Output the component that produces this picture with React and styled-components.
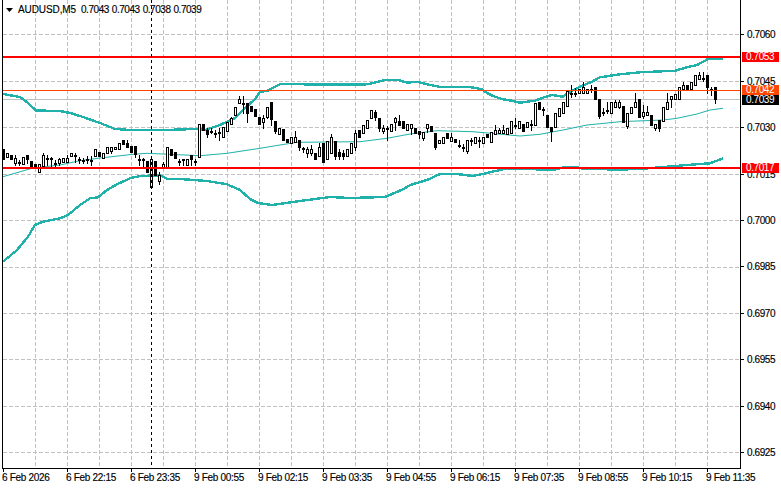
import React from "react";
import styled, { createGlobalStyle } from "styled-components";

const Global = createGlobalStyle`
  html, body { margin: 0; padding: 0; background: #fff; }
  body { font-family: "Liberation Sans", Arial, sans-serif; }
`;

const Terminal = styled.div`
  display: grid;
  grid-template-columns: 741px 40px;
  grid-template-rows: 469px 20px;
  width: 781px;
  height: 489px;
  overflow: hidden;
  background: #fff;
  color: #000;
  font-size: 10px;
  letter-spacing: -0.3px;
  -webkit-text-stroke: 0.15px currentColor;
`;
const Plot = styled.div`
  position: relative;
  width: 741px;
  height: 469px;
`;
const ChartSvg = styled.svg`
  display: block;
`;
const Legend = styled.div`
  position: absolute;
  top: 4px;
  left: 6px;
  display: flex;
  align-items: center;
  gap: 5px;
  line-height: 12px;
  white-space: pre;
`;
const LegendName = styled.span`
  letter-spacing: -0.1px;
`;
const LegendValues = styled.span`
  letter-spacing: -0.45px;
  word-spacing: 0.6px;
`;
const PriceAxis = styled.div`
  position: relative;
  display: flex;
  flex-direction: column;
  padding-top: 11.5px;
  letter-spacing: -0.4px;
`;
const PriceTick = styled.div`
  flex: 0 0 46.44px;
  display: flex;
  align-items: center;
  gap: 3px;
  line-height: 9px;
  &::before {
    content: "";
    width: 3px;
    height: 1px;
    background: #000;
  }
`;
const Tag = styled.div`
  position: absolute;
  left: 1px;
  top: ${(p) => p.$top}px;
  width: 37px;
  height: 10px;
  line-height: 10px;
  padding-left: 4px;
  box-sizing: border-box;
  color: #fff;
  -webkit-text-stroke: 0;
  background: ${(p) => p.$bg};
`;
const TimeAxis = styled.div`
  grid-column: 1 / -1;
  display: flex;
  padding-left: 2px;
`;
const TimeTick = styled.div`
  flex: 0 0 64px;
  height: 20px;
  position: relative;
  line-height: 12px;
  padding-top: 3px;
  box-sizing: border-box;
  white-space: nowrap;
  &::before {
    content: "";
    position: absolute;
    left: 1px;
    top: 0;
    width: 1px;
    height: 3px;
    background: #000;
  }
`;

const prices = ["0.7060","0.7045","0.7030","0.7015","0.7000","0.6985","0.6970","0.6955","0.6940","0.6925"];
const times = ["6 Feb 2026","6 Feb 22:15","6 Feb 23:35","9 Feb 00:55","9 Feb 02:15","9 Feb 03:35","9 Feb 04:55","9 Feb 06:15","9 Feb 07:35","9 Feb 08:55","9 Feb 10:15","9 Feb 11:35"];

const upper = "3,94 20,97 28,103 36,110.5 60,111 70,113 80,116 100,123 115,129 130,130 165,130 195,129 205,130 220,125 235,118 245,108 255,99 260,92 268,90.5 275,86.7 280,84.3 292,83.7 300,84 310,84.7 368,84.3 378,81.7 385,80 398,80 407,82.7 417,81.7 427,84.3 440,87 470,87 482,89.3 487,93 493,96 503,99.3 512,100.7 520,102.7 535,100.7 543,97.7 552,95 563,96.7 570,91.7 580,86.7 592,81.7 600,77.3 620,74.3 640,72.3 675,70.7 687,67.3 697,65 708,59 715,58.3 723,58.3";
const middle = "3,176.7 33,168 60,165 80,160.7 100,158 133,154.3 147,153.3 200,155.7 227,153.3 260,148.3 280,145 297,142.3 360,141.7 387,138.3 410,134 437,130.7 473,131.7 520,136 540,134.3 563,130 587,125 620,121.7 663,120 677,118.3 697,114 710,110 723,108.3";
const lower = "3,261.7 17,250 28,236.7 35,225 43,221.7 60,218.3 68,215 80,205 90,198.3 98,197.3 107,190 117,184.3 130,178.3 140,176 160,175.3 167,178.7 180,179 207,181 227,184.3 240,190 250,199 258,203 272,205 300,201 330,197 350,198 385,197 403,189.3 410,185 427,180 440,174 457,174 473,176 487,173 503,169.3 517,168.3 540,169.5 555,169.5 565,167 575,167 585,169 620,169.5 640,169 667,166.7 687,165 710,163.3 723,158.3";

// Candles: body top, body bottom, wick top, wick bottom, filled. Values are 3x crop rows.
const seg1 = [[448,478,448,478,1],[458,472,458,472,0],[464,476,464,476,1],[475,488,465,495,0],[487,488,480,495,0],[470,492,470,492,0],[465,478,465,490,1],[482,500,482,500,1],[492,505,492,505,1],[493,515,493,515,0],[465,497,458,497,0],[473,474,465,495,0],[473,474,470,497,0],[490,491,480,498,0],[476,488,475,495,0],[473,485,473,485,0],[473,485,465,485,0],[458,467,458,467,0],[465,466,458,485,0],[478,479,470,488,0],[480,481,475,490,0],[478,479,468,490,0],[480,481,468,495,0],[448,468,448,468,0],[456,468,456,468,1],[458,475,458,475,0],[440,460,440,460,0],[440,452,440,460,0],[440,448,440,448,0],[430,448,430,448,0],[421,432,421,432,1],[430,440,420,440,1],[438,455,438,455,1],[438,462,438,470,1],[476,477,465,495,0],[478,479,475,500,0],[484,515,484,515,1],[476,560,476,560,0],[484,525,484,525,1],[525,543,515,552,0],[492,500,485,500,0],[440,500,440,500,0],[448,466,448,466,1],[455,475,455,475,1],[484,485,476,495,0],[478,479,476,495,0],[476,495,476,495,0],[466,478,466,495,1],[484,485,476,495,0],[372,470,372,470,0],[372,390,372,390,1],[390,402,385,412,1],[392,393,385,400,0],[400,401,390,410,0],[395,396,385,420,0],[380,412,380,412,0],[365,392,365,392,0],[355,372,350,372,0],[320,345,320,345,0],[297,308,288,308,0],[310,311,288,340,0],[310,340,310,365,1],[318,332,318,332,1],[328,348,328,348,1],[350,372,350,372,1]];
const seg2 = [[175,185,165,203,0],[140,170,140,175,0],[127,178,127,195,1],[183,212,183,220,1],[203,222,203,222,0],[207,240,207,240,1],[238,245,238,245,1],[232,248,232,248,0],[232,245,212,245,0],[240,262,240,270,1],[265,266,260,277,0],[268,278,260,290,0],[268,278,255,285,0],[278,297,278,297,1],[260,287,250,287,0],[248,305,248,305,1],[242,297,242,297,0],[232,280,222,280,0],[242,288,242,298,1],[275,288,268,298,1],[278,288,270,298,1],[268,287,268,287,0],[250,278,250,278,0],[220,260,210,270,0],[210,232,210,232,1],[195,220,195,220,0],[180,205,180,205,0],[150,175,150,175,0],[157,170,150,180,1],[175,203,175,212,1],[203,213,195,220,0],[205,206,198,240,0],[192,212,192,212,0],[175,187,170,210,0],[183,195,165,195,1],[183,203,183,203,1],[193,210,193,210,0],[193,205,193,222,0],[203,220,203,220,1],[212,222,212,235,1],[215,233,215,240,0],[193,205,193,215,0],[197,212,197,212,1],[218,260,218,268,1],[240,250,240,250,0],[232,250,232,250,0],[220,235,220,235,1],[232,242,220,242,0],[237,245,237,245,1],[255,256,240,260,0],[262,263,252,272,0],[240,272,240,278,0],[240,241,235,255,0],[232,250,232,250,0],[240,241,232,260,0],[232,250,232,250,0],[222,232,222,232,1],[215,245,215,245,0],[210,222,195,222,0],[210,220,205,220,0],[210,220,195,220,0],[205,222,205,222,0],[183,220,183,220,0],[195,196,175,205,0],[183,205,183,205,0]];
const seg3 = [[282,302,282,302,1],[275,292,275,292,0],[283,284,270,300,0],[220,285,220,285,0],[215,238,215,238,1],[238,239,230,255,0],[255,290,255,290,1],[292,303,292,332,1],[248,292,248,292,0],[235,257,235,257,0],[217,248,217,248,0],[182,228,182,228,0],[190,191,165,200,0],[190,191,175,198,0],[177,190,177,190,0],[170,190,155,190,0],[177,190,177,190,0],[178,179,165,185,0],[172,208,172,208,1],[208,258,208,265,1],[245,246,235,255,0],[240,241,215,250,0],[217,248,217,248,0],[217,230,210,230,0],[217,230,210,235,0],[228,275,228,275,1],[250,288,250,293,0],[230,250,230,250,0],[215,230,190,230,0],[208,260,208,260,1],[247,258,225,265,0],[247,255,228,255,0],[255,285,255,285,1],[283,293,283,300,0],[270,295,270,302,1],[230,272,230,272,0],[215,238,190,238,0],[198,207,198,230,0],[193,207,193,208,0],[172,207,172,207,0],[165,178,155,178,0],[165,177,165,180,1],[155,177,155,177,0],[135,165,135,165,0],[135,146,127,146,0],[143,144,127,152,0],[135,170,135,190,1],[178,179,172,195,0],[172,208,172,218,1]];

const row = (v, base) => Math.round(base + v / 3);
const candles = [
  ...seg1.map((c) => c.map((v, k) => (k < 4 ? row(v, 0) : v))),
  ...seg2.map((c) => c.map((v, k) => (k < 4 ? row(v, 60) : v))),
  ...seg3.map((c) => c.map((v, k) => (k < 4 ? row(v, 30) : v))),
];

const vGrid = Array.from({ length: 22 }, (_, i) => 35.5 + 32 * i);
const hGrid = prices.map((_, i) => Math.round(34.3 + 46.44 * i) + 0.5);

function Chart() {
  return (
    <ChartSvg width="741" height="469" viewBox="0 0 741 469">
      <g stroke="#c0c0c0" strokeWidth="1" strokeDasharray="4 2" shapeRendering="crispEdges">
        {vGrid.map((x) => <line key={x} x1={x} y1="0" x2={x} y2="468" />)}
        {hGrid.map((y) => <line key={y} x1="3" y1={y} x2="740" y2={y} />)}
      </g>
      <line x1="3" y1="99.5" x2="740" y2="99.5" stroke="#c0c0c0" shapeRendering="crispEdges" />
      <polyline points={middle} fill="none" stroke="#20b2aa" strokeWidth="1" />
      <polyline points={upper} fill="none" stroke="#20b2aa" strokeWidth="2.4" shapeRendering="crispEdges" />
      <polyline points={lower} fill="none" stroke="#20b2aa" strokeWidth="2.4" shapeRendering="crispEdges" />
      <g shapeRendering="crispEdges">
        {candles.map(([t, b, wt, wb, f], i) => {
          const x = 3 + 4 * i;
          return (
            <g key={i}>
              <line x1={x + 0.5} y1={wt} x2={x + 0.5} y2={wb + 1} stroke="#000" />
              <rect x={x - 0.5} y={t + 0.5} width="2" height={Math.max(b - t, 1) - 0.5} fill={f ? "#000" : "#fff"} stroke="#000" />
            </g>
          );
        })}
      </g>
      <g shapeRendering="crispEdges">
        <line x1="3" y1="90.5" x2="740" y2="90.5" stroke="#ff4500" />
        <line x1="3" y1="57" x2="740" y2="57" stroke="#ff0000" strokeWidth="2" />
        <line x1="3" y1="168" x2="740" y2="168" stroke="#ff0000" strokeWidth="2" />
        <line x1="151.5" y1="0" x2="151.5" y2="468" stroke="#000" strokeDasharray="3 3" />
        <line x1="2.5" y1="0" x2="2.5" y2="469" stroke="#000" />
        <line x1="2" y1="468.5" x2="741" y2="468.5" stroke="#000" />
        <line x1="740.5" y1="0" x2="740.5" y2="469" stroke="#000" />
      </g>
    </ChartSvg>
  );
}

export default function App() {
  return (
    <>
      <Global />
      <Terminal>
        <Plot>
          <Chart />
          <Legend>
            <svg width="7" height="4" viewBox="0 0 7 4"><path d="M0 0h7L3.5 4z" fill="#000" /></svg>
            <LegendName>AUDUSD,M5</LegendName>
            <LegendValues>0.7043 0.7043 0.7038 0.7039</LegendValues>
          </Legend>
        </Plot>
        <PriceAxis>
          {prices.map((p) => <PriceTick key={p}>{p}</PriceTick>)}
          <Tag $top={52} $bg="#ff0000">0.7053</Tag>
          <Tag $top={85} $bg="#ff4500">0.7042</Tag>
          <Tag $top={95} $bg="#000">0.7039</Tag>
          <Tag $top={163} $bg="#ff0000">0.7017</Tag>
        </PriceAxis>
        <TimeAxis>
          {times.map((t) => <TimeTick key={t}>{t}</TimeTick>)}
        </TimeAxis>
      </Terminal>
    </>
  );
}
